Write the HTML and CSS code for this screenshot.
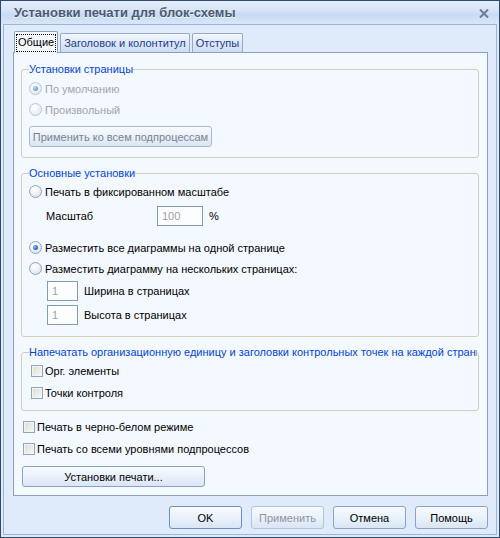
FILE: index.html
```html
<!DOCTYPE html>
<html lang="ru">
<head>
<meta charset="utf-8">
<title>Установки печати для блок-схемы</title>
<link rel="stylesheet" href="styles.css">
</head>
<body>
<div class="window">
  <div class="titlebar">
    <span class="title">Установки печати для блок-схемы</span>
    <svg class="close" width="10" height="9" viewBox="0 0 10 9"><path d="M1 0.5 L9 8.5 M9 0.5 L1 8.5" stroke="#6d7d93" stroke-width="2"/></svg>
  </div>
  <div class="client">
    <div class="tabs">
      <div class="tab active"><span class="focus">Общие</span></div>
      <div class="tab">Заголовок и колонтитул</div>
      <div class="tab">Отступы</div>
    </div>
    <div class="panel">
      <fieldset class="group g1">
        <legend>Установки страницы</legend>
        <div class="row disabled"><span class="radio checked"></span>По умолчанию</div>
        <div class="row disabled"><span class="radio"></span>Произвольный</div>
        <div class="btn wide disabled-btn btn-sub">Применить ко всем подпроцессам</div>
      </fieldset>
      <fieldset class="group g2">
        <legend>Основные установки</legend>
        <div class="row"><span class="radio"></span>Печать в фиксированном масштабе</div>
        <div class="scale-row"><span class="scale-label">Масштаб</span><span class="input scale-input">100</span><span class="pct">%</span></div>
        <div class="row row-gap"><span class="radio checked"></span>Разместить все диаграммы на одной странице</div>
        <div class="row"><span class="radio"></span>Разместить диаграмму на нескольких страницах:</div>
        <div class="num-row first"><span class="input num-input">1</span><span>Ширина в страницах</span></div>
        <div class="num-row"><span class="input num-input">1</span><span>Высота в страницах</span></div>
      </fieldset>
      <fieldset class="group g3">
        <legend>Напечатать организационную единицу и заголовки контрольных точек на каждой странице</legend>
        <div class="crow"><span class="check"></span>Орг. элементы</div>
        <div class="crow"><span class="check"></span>Точки контроля</div>
      </fieldset>
      <div class="crow outer first-outer"><span class="check"></span>Печать в черно-белом режиме</div>
      <div class="crow outer"><span class="check"></span>Печать со всеми уровнями подпроцессов</div>
      <div class="btn wide btn-print">Установки печати...</div>
    </div>
    <div class="buttons">
      <div class="btn dlg default">OK</div>
      <div class="btn dlg disabled-btn">Применить</div>
      <div class="btn dlg">Отмена</div>
      <div class="btn dlg">Помощь</div>
    </div>
  </div>
</div>
</body>
</html>
```
FILE: styles.css
```css
html, body {
  margin: 0;
  padding: 0;
  background: #dfeafb;
}

.window {
  width: 500px;
  height: 538px;
  box-sizing: border-box;
  border: 1px solid #2f4b72;
  background: #dfeafb;
  display: flex;
  flex-direction: column;
  font-family: "Liberation Sans", Arial, sans-serif;
  font-size: 11px;
  color: #000;
}

.titlebar {
  height: 23px;
  flex: none;
  display: flex;
  align-items: center;
  justify-content: space-between;
  padding: 0 10px 0 13px;
  background: linear-gradient(#e4edfa 0%, #d7e4f7 40%, #c8daf3 60%, #d9e6f8 100%);
}

.title {
  font-weight: bold;
  font-size: 13px;
  letter-spacing: 0;
  color: #4b5a70;
  text-shadow: 0 1px 0 #eef4fc;
}

.close {
  display: block;
  margin-top: 2px;
}

.client {
  flex: 1;
  display: flex;
  flex-direction: column;
  margin: 0 2px 2px;
  border: 1px solid #9ab5de;
  padding: 6px 8px 0 9px;
  min-height: 0;
}

.tabs {
  display: flex;
  align-items: flex-end;
  gap: 2px;
  height: 21px;
  padding-left: 1px;
  position: relative;
  z-index: 1;
  flex: none;
}

.tab {
  box-sizing: border-box;
  height: 19px;
  padding: 0 3px;
  display: flex;
  align-items: center;
  border: 1px solid #98aacb;
  border-bottom: none;
  border-radius: 2px 2px 0 0;
  background: linear-gradient(#f3f7fd, #dbe6f7 60%, #cddcf3);
  color: #1b3c8c;
  white-space: nowrap;
}

.tab.active {
  height: 22px;
  margin-bottom: -1px;
  padding: 0 1px;
  background: #f4f8ff;
  border-color: #8d9fbd;
  color: #000;
}

.focus {
  border: 1px dotted #000;
  padding: 1px 1px 2px;
  line-height: 13px;
}

.panel {
  flex: 1;
  box-sizing: border-box;
  border: 1px solid #8d9fbd;
  background: #f4f8ff;
  padding: 9px 8px 0 7px;
  min-height: 0;
  overflow: hidden;
}

.group {
  margin: 0;
  border: 1px solid #d0d0bf;
  border-radius: 3px;
  padding: 2px 8px 10px 7px;
  min-width: 0;
}

.group legend {
  padding: 0;
  line-height: 14px;
  color: #0046d5;
  white-space: nowrap;
  overflow: hidden;
  max-width: 448px;
}

.g2, .g3 {
  margin-top: 8px;
}

.g2 {
  padding-top: 1px;
  padding-bottom: 11px;
}

.g3 {
  padding-top: 1px;
  padding-bottom: 6px;
}

.row {
  display: flex;
  align-items: center;
  height: 21px;
  white-space: nowrap;
}

.row.disabled {
  color: #a1a5ab;
}

.row-gap {
  margin-top: 11px;
}

.radio {
  box-sizing: border-box;
  width: 13px;
  height: 13px;
  border-radius: 50%;
  border: 1px solid #8ea3c0;
  background: radial-gradient(circle at 40% 35%, #ffffff 0%, #eef2f7 45%, #cfd9e6 100%);
  margin-right: 3px;
  flex: none;
  position: relative;
}

.radio.checked::after {
  content: "";
  position: absolute;
  left: 3px;
  top: 3px;
  width: 5px;
  height: 5px;
  border-radius: 50%;
  background: radial-gradient(circle at 35% 35%, #8fc0ec 0%, #2a6db5 60%, #1c4f8f 100%);
}

.row.disabled .radio {
  border-color: #b9c6d8;
  background: radial-gradient(circle at 40% 35%, #ffffff 0%, #f0f3f8 45%, #dbe2ec 100%);
}

.row.disabled .radio.checked::after {
  background: radial-gradient(circle at 35% 35%, #b8d6f0 0%, #6e9fd0 70%, #5a89bb 100%);
}

.btn {
  box-sizing: border-box;
  display: flex;
  align-items: center;
  justify-content: center;
  border: 1px solid #8ca2c4;
  border-radius: 3px;
  background: linear-gradient(#f8fbff 0%, #eaf1fb 50%, #d9e5f6 100%);
  white-space: nowrap;
}

.wide {
  width: 183px;
  height: 21px;
}

.btn-sub {
  margin-top: 6px;
}

.disabled-btn {
  color: #8f949c;
  border-color: #b4c3d8;
}

.btn-sub.disabled-btn {
  color: #7d838c;
  border-color: #a9b9d1;
}

.scale-row {
  display: flex;
  align-items: center;
  height: 20px;
  margin-top: 4px;
  padding-left: 17px;
}

.scale-label {
  width: 111px;
}

.input {
  box-sizing: border-box;
  height: 20px;
  border: 1px solid #7f9db9;
  background: #fbfdff;
  color: #a0a0a0;
  display: flex;
  align-items: center;
  padding-left: 4px;
}

.scale-input {
  width: 46px;
}

.pct {
  margin-left: 6px;
}

.num-row {
  display: flex;
  align-items: center;
  height: 20px;
  margin-top: 4px;
  padding-left: 18px;
  gap: 6px;
}

.num-row.first {
  margin-top: 2px;
}

.num-input {
  width: 31px;
}

.crow {
  display: flex;
  align-items: center;
  height: 22px;
  white-space: nowrap;
}

.check {
  box-sizing: border-box;
  width: 12px;
  height: 12px;
  border: 1px solid #8ea6c8;
  background: linear-gradient(135deg, #dcdcd6 0%, #eeeee9 60%, #fbfbf9 100%);
  box-shadow: inset 0 0 0 1px #f4f4f0;
  margin: 0 2px 0 2px;
  flex: none;
}

.outer {
  margin-left: 0;
}

.first-outer {
  margin-top: 5px;
}

.btn-print {
  margin-top: 6px;
  margin-left: 1px;
}

.buttons {
  flex: none;
  display: flex;
  justify-content: flex-end;
  gap: 9px;
  height: 23px;
  margin-top: 10px;
  margin-bottom: 5px;
}

.dlg {
  width: 73px;
  height: 23px;
}

.default {
  border-color: #6f8fbd;
}
```
